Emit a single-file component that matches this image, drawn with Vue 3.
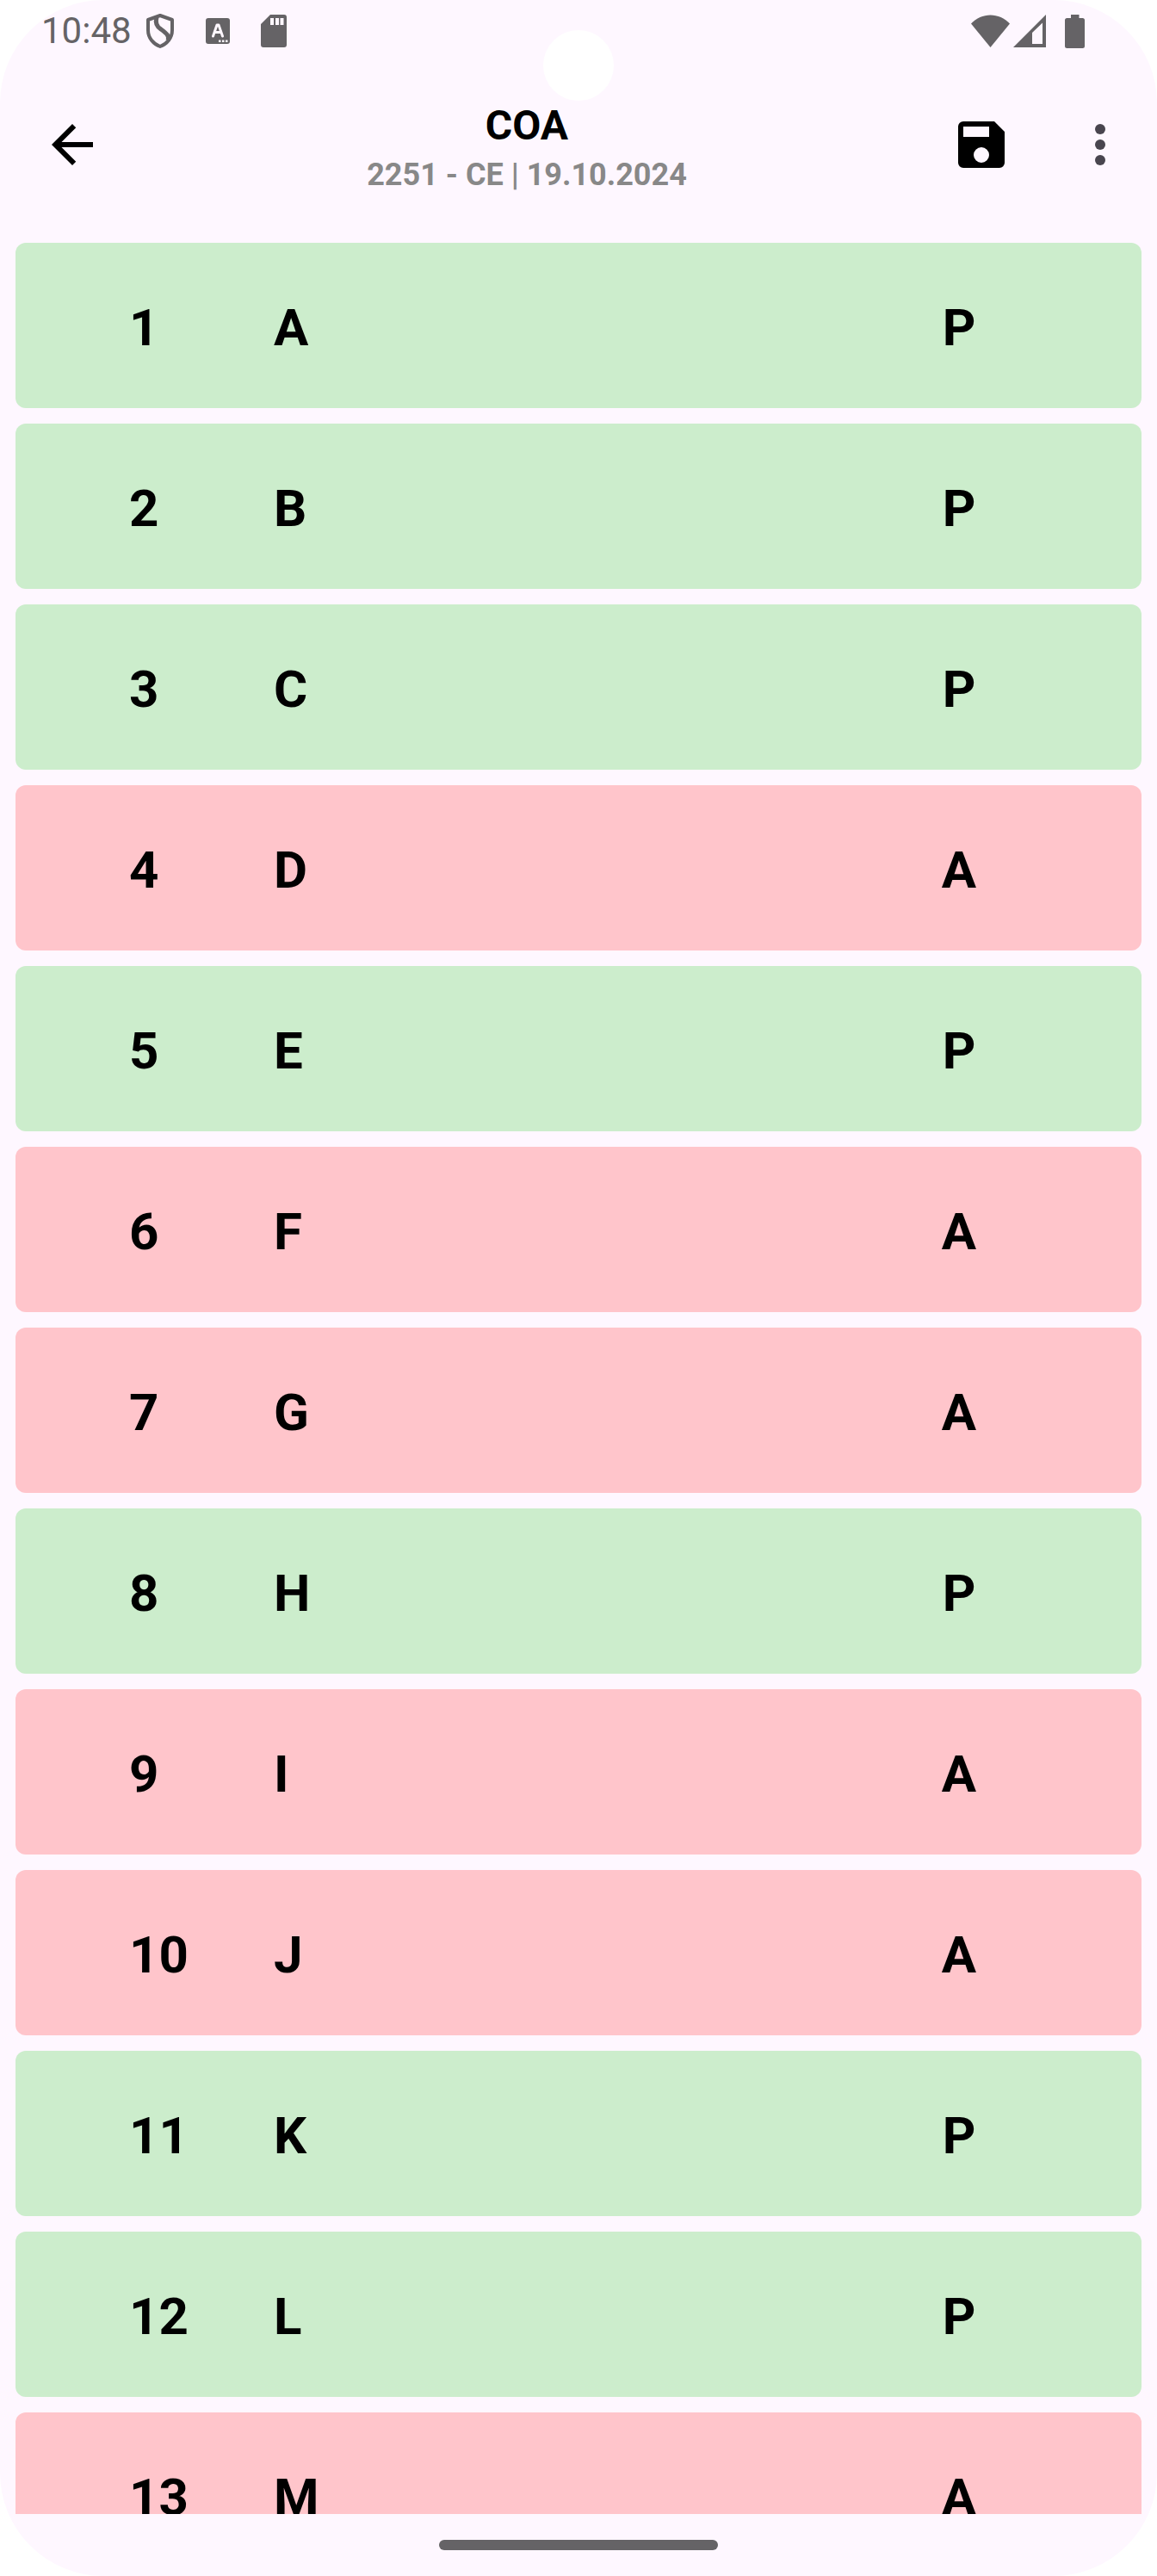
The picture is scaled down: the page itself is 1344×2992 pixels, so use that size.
<script setup>
import { ref } from 'vue'

const students = ref([
  { roll: 1, name: 'A', present: true },
  { roll: 2, name: 'B', present: true },
  { roll: 3, name: 'C', present: true },
  { roll: 4, name: 'D', present: false },
  { roll: 5, name: 'E', present: true },
  { roll: 6, name: 'F', present: false },
  { roll: 7, name: 'G', present: false },
  { roll: 8, name: 'H', present: true },
  { roll: 9, name: 'I', present: false },
  { roll: 10, name: 'J', present: false },
  { roll: 11, name: 'K', present: true },
  { roll: 12, name: 'L', present: true },
  { roll: 13, name: 'M', present: false },
])
</script>

<template>
  <div class="screen">
    <div class="camera" aria-hidden="true"></div>

    <div class="status-bar">
      <div class="status-left">
        <time class="clock">10:48</time>
        <svg class="status-icon shield" viewBox="0 0 34 40" width="34" height="40" aria-hidden="true">
          <path d="M17 2 31 7V19C31 28 25 35 17 38 9 35 3 28 3 19V7Z" fill="none" stroke="currentColor" stroke-width="4" stroke-linejoin="round" />
          <path d="M13 4C11 11 13 15 18 18 25 23 28 26 26 31" fill="none" stroke="currentColor" stroke-width="5" />
        </svg>
        <svg class="status-icon" viewBox="0 0 28 32" width="28" height="32" aria-hidden="true">
          <rect x="0" y="1" width="28" height="30" rx="3" fill="currentColor" />
          <path d="M8.500 22 13 9H15L19.500 22M10.500 17.500H17.500" fill="none" stroke="#fef7ff" stroke-width="3" stroke-linecap="round" stroke-linejoin="round" />
          <path d="M15 26.500h2.500v2.500H15zM19 26.500h2.500v2.500H19zM23 26.500h2.500v2.500H23z" fill="#fef7ff" />
        </svg>
        <svg class="status-icon" viewBox="0 0 30 38" width="30" height="38" aria-hidden="true">
          <path fill="currentColor" fill-rule="evenodd" d="M11 0H27a3 3 0 0 1 3 3V35a3 3 0 0 1-3 3H3a3 3 0 0 1-3-3V11ZM11 4V12H15V4ZM17 4V12H21V4ZM22.500 4V12H26.500V4Z" />
        </svg>
      </div>
      <div class="status-right">
        <svg viewBox="0 0 45 38" width="45" height="38" aria-hidden="true">
          <path fill="currentColor" d="M0 10.500C12-3 33-3 45 10.500L22.500 38Z" />
        </svg>
        <svg class="signal" viewBox="0 0 38 38" width="38" height="38" aria-hidden="true">
          <path fill="currentColor" fill-rule="evenodd" d="M0 38 38 0V38ZM22 21V34H34V9.500Z" />
        </svg>
        <svg class="battery" viewBox="0 0 23 39" width="23" height="39" aria-hidden="true">
          <path fill="currentColor" d="M7 0H16.500V4H20.500A2.500 2.500 0 0 1 23 6.500V36.500A2.500 2.500 0 0 1 20.500 39H2.500A2.500 2.500 0 0 1 0 36.500V6.500A2.500 2.500 0 0 1 2.500 4H7Z" />
        </svg>
      </div>
    </div>

    <header class="app-bar">
      <button class="icon-button" type="button" aria-label="Back">
        <svg viewBox="0 0 24 24" width="72" height="72" aria-hidden="true">
          <path d="M20 11H7.830l5.590-5.590L12 4l-8 8 8 8 1.410-1.410L7.830 13H20z" />
        </svg>
      </button>
      <div class="heading">
        <h1>COA</h1>
        <p>2251 - CE | 19.10.2024</p>
      </div>
      <button class="icon-button" type="button" aria-label="Save">
        <svg viewBox="0 0 24 24" width="72" height="72" aria-hidden="true">
          <path d="M17 3H5a2 2 0 0 0-2 2v14a2 2 0 0 0 2 2h14a2 2 0 0 0 2-2V7zM12 19a3 3 0 1 1 0-6 3 3 0 0 1 0 6zM15 9H5V5h10z" />
        </svg>
      </button>
      <button class="icon-button more" type="button" aria-label="More options">
        <svg viewBox="0 0 24 24" width="72" height="72" aria-hidden="true">
          <circle cx="12" cy="6" r="2" />
          <circle cx="12" cy="12" r="2" />
          <circle cx="12" cy="18" r="2" />
        </svg>
      </button>
    </header>

    <ul class="students">
      <li v-for="s in students" :key="s.roll">
        <button
          type="button"
          class="card"
          :class="{ present: s.present }"
          @click="s.present = !s.present"
        >
          <span>{{ s.roll }}</span>
          <span>{{ s.name }}</span>
          <span class="mark">{{ s.present ? 'P' : 'A' }}</span>
        </button>
      </li>
    </ul>

    <div class="nav-bar"><div class="pill"></div></div>
  </div>
</template>

<style>
body {
  background: #fff;
}
</style>

<style scoped>
.screen {
  position: relative;
  display: flex;
  flex-direction: column;
  height: 100vh;
  overflow: hidden;
  border-radius: 120px;
  background: #fef7ff;
  color: #000;
  font-family: Roboto, sans-serif;
}

.camera {
  position: absolute;
  top: 35px;
  left: 50%;
  width: 82px;
  height: 82px;
  margin-left: -41px;
  border-radius: 50%;
  background: #fff;
}

.status-bar {
  display: flex;
  flex: none;
  align-items: center;
  justify-content: space-between;
  height: 72px;
  padding: 0 84px 0 48px;
  color: #656366;
}

.status-left,
.status-right {
  display: flex;
  align-items: center;
}

.clock {
  font-size: 42px;
  line-height: 72px;
}

.status-icon {
  margin-left: 36px;
}

.shield {
  margin-left: 16px;
}

.signal {
  margin-left: 4px;
}

.battery {
  margin-left: 22px;
}

.app-bar {
  display: flex;
  flex: none;
  align-items: center;
  height: 192px;
  padding-left: 12px;
}

.icon-button {
  display: flex;
  flex: none;
  align-items: center;
  justify-content: center;
  width: 144px;
  height: 144px;
  padding: 0;
  border: 0;
  background: none;
  color: #000;
}

.icon-button svg {
  fill: currentColor;
}

.more {
  width: 132px;
  color: #49454f;
}

.heading {
  flex: 1;
  min-width: 0;
  text-align: center;
}

.heading h1,
.heading p {
  margin: 0;
  font-weight: 700;
}

.heading h1 {
  font-size: 48px;
  line-height: 70px;
}

.heading p {
  font-size: 36px;
  line-height: 44px;
  color: #888;
}

.students {
  display: flex;
  flex: 1;
  flex-direction: column;
  gap: 18px;
  min-height: 0;
  margin: 0;
  padding: 18px 18px 0;
  overflow-y: auto;
  scrollbar-width: none;
  list-style: none;
}

.card {
  display: grid;
  grid-template-columns: 168px 1fr 424px;
  width: 100%;
  padding: 63px 0 57px 132px;
  border: 0;
  border-radius: 12px;
  background: #ffc5cb;
  color: #000;
  font: 700 60px/72px Roboto, sans-serif;
  text-align: left;
}

.card.present {
  background: #ccedcc;
}

.mark {
  text-align: center;
}

.nav-bar {
  display: flex;
  flex: none;
  align-items: center;
  justify-content: center;
  height: 72px;
}

.pill {
  width: 324px;
  height: 12px;
  border-radius: 6px;
  background: #656366;
}
</style>
